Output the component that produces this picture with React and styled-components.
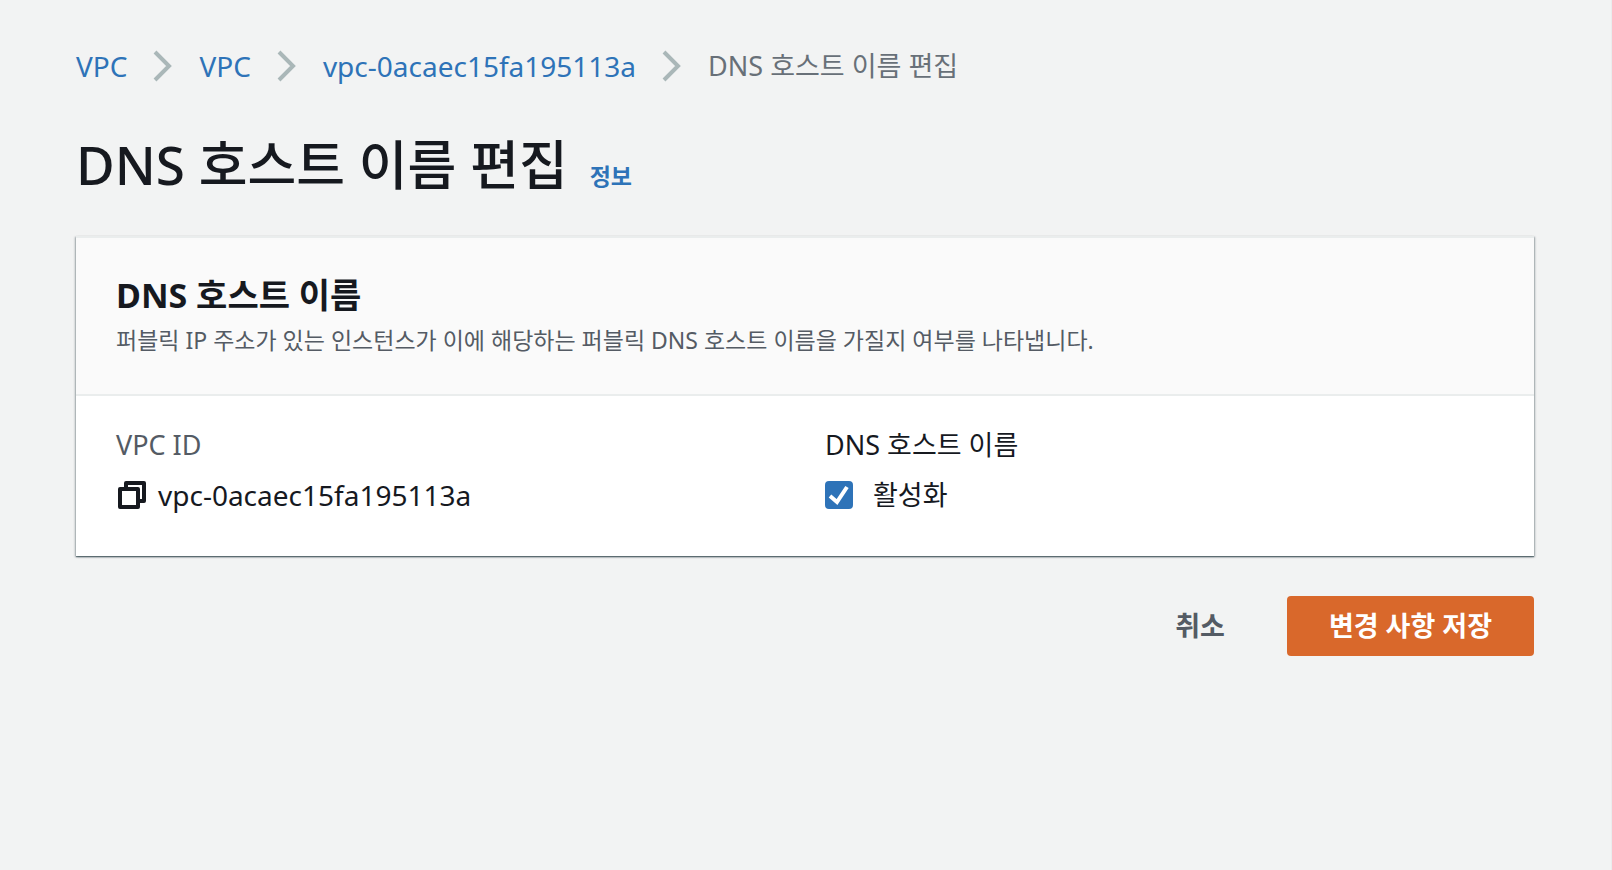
import React, { useState } from "react";
import styled, { createGlobalStyle } from "styled-components";

const GlobalStyle = createGlobalStyle`
  *, *::before, *::after {
    box-sizing: border-box;
  }

  body {
    margin: 0;
    background-color: #f2f3f3;
    color: #16191f;
    font-family: "Noto Sans", "Noto Sans CJK KR", sans-serif;
    font-size: 27px;
    line-height: 40px;
  }
`;

const Page = styled.div`
  min-height: 100vh;
  padding: 46px 77px 46px 76px;
  border-right: 1px solid #eaeded;
`;

// Breadcrumbs
const BreadcrumbList = styled.ol`
  display: flex;
  align-items: center;
  gap: 26px;
  margin: 0;
  padding: 0;
  list-style: none;
`;

const BreadcrumbItem = styled.li`
  display: flex;
  align-items: center;
  gap: 26px;
  color: #687078;
`;

const Link = styled.a`
  color: #2e73b8;
  text-decoration: none;
  font-size: 28px;
`;

const Chevron = styled.svg`
  width: 20px;
  height: 32px;
  fill: none;
  stroke: #aab7b8;
  stroke-width: 4;
`;

// Page heading
const Heading = styled.div`
  display: flex;
  align-items: baseline;
  gap: 22px;
  margin: 39px 0 31px;
`;

const Title = styled.h1`
  margin: 0;
  font-size: 53px;
  font-weight: 500;
  line-height: 80px;
`;

const InfoLink = styled(Link)`
  font-size: 23px;
  font-weight: 700;
`;

// Card
const Card = styled.section`
  background-color: #ffffff;
  border-top: 2px solid #eaeded;
  box-shadow: 0 1px 1px 0 rgba(0, 28, 36, 0.4), 1px 1px 2px 0 rgba(0, 28, 36, 0.3),
    -1px 1px 2px 0 rgba(0, 28, 36, 0.3);
`;

const CardHeader = styled.header`
  padding: 35px 40px 34px;
  background-color: #fafafa;
  border-bottom: 2px solid #eaeded;
`;

const CardTitle = styled.h2`
  margin: 0;
  font-size: 34px;
  font-weight: 700;
  line-height: 44px;
`;

const Description = styled.p`
  margin: 3px 0 0;
  color: #545b64;
  font-size: 23px;
`;

const CardBody = styled.div`
  display: grid;
  grid-template-columns: 1fr 1fr;
  gap: 40px;
  padding: 29px 40px 41px;
`;

const Field = styled.div`
  display: flex;
  flex-direction: column;
  gap: 10px;
  min-width: 0;
`;

const FieldLabel = styled.div`
  color: ${({ $muted }) => ($muted ? "#545b64" : "#16191f")};
`;

const ResourceId = styled.div`
  display: flex;
  align-items: center;
  gap: 12px;
  font-size: 28px;
`;

const CopyButton = styled.button`
  display: flex;
  padding: 0 0 0 2px;
  border: 0;
  background: none;
  color: #16191f;
  cursor: pointer;
`;

const CheckboxLabel = styled.label`
  display: flex;
  align-items: center;
  gap: 20px;
  cursor: pointer;
`;

const CheckboxBox = styled.span`
  display: grid;
  width: 28px;
  height: 28px;

  > * {
    grid-area: 1 / 1;
  }
`;

const Checkbox = styled.input`
  appearance: none;
  width: 28px;
  height: 28px;
  margin: 0;
  border: 2px solid #687078;
  border-radius: 4px;
  background-color: #ffffff;
  cursor: pointer;

  &:checked {
    border-color: #2e73b8;
    background-color: #2e73b8;
  }
`;

const CheckMark = styled.svg`
  width: 28px;
  height: 28px;
  fill: none;
  stroke: #ffffff;
  stroke-width: 4;
  pointer-events: none;
`;

// Form actions
const Actions = styled.div`
  display: flex;
  justify-content: flex-end;
  gap: 20px;
  margin-top: 40px;
`;

const Button = styled.button`
  height: 60px;
  padding: 0 42px;
  border: 0;
  border-radius: 4px;
  background-color: ${({ $primary }) => ($primary ? "#d9682b" : "transparent")};
  color: ${({ $primary }) => ($primary ? "#ffffff" : "#545b64")};
  font: inherit;
  font-weight: 700;
  cursor: pointer;
`;

const VPC_ID = "vpc-0acaec15fa195113a";

const crumbs = ["VPC", "VPC", VPC_ID];

const CopyIcon = () => (
  <svg width="28" height="28" viewBox="0 0 28 28" fill="none" stroke="currentColor" strokeWidth="4" strokeLinejoin="round">
    <path d="M8 8V2H26V20H20" />
    <path d="M2 8H20V26H2Z" />
  </svg>
);

const App = () => {
  const [enabled, setEnabled] = useState(true);

  return (
    <>
      <GlobalStyle />
      <Page>
        <nav aria-label="Breadcrumb">
          <BreadcrumbList>
            {crumbs.map((crumb, index) => (
              <BreadcrumbItem key={index}>
                <Link href="#">{crumb}</Link>
                <Chevron viewBox="0 0 20 32" aria-hidden="true">
                  <path d="M2 2L16 16L2 30" />
                </Chevron>
              </BreadcrumbItem>
            ))}
            <BreadcrumbItem aria-current="page">DNS 호스트 이름 편집</BreadcrumbItem>
          </BreadcrumbList>
        </nav>

        <main>
          <Heading>
            <Title>DNS 호스트 이름 편집</Title>
            <InfoLink href="#">정보</InfoLink>
          </Heading>

          <Card>
            <CardHeader>
              <CardTitle>DNS 호스트 이름</CardTitle>
              <Description>
                퍼블릭 IP 주소가 있는 인스턴스가 이에 해당하는 퍼블릭 DNS 호스트 이름을 가질지 여부를 나타냅니다.
              </Description>
            </CardHeader>
            <CardBody>
              <Field>
                <FieldLabel $muted>VPC ID</FieldLabel>
                <ResourceId>
                  <CopyButton type="button" aria-label="복사">
                    <CopyIcon />
                  </CopyButton>
                  {VPC_ID}
                </ResourceId>
              </Field>
              <Field role="group" aria-labelledby="dns-label">
                <FieldLabel id="dns-label">DNS 호스트 이름</FieldLabel>
                <CheckboxLabel>
                  <CheckboxBox>
                    <Checkbox
                      type="checkbox"
                      checked={enabled}
                      onChange={(e) => setEnabled(e.target.checked)}
                    />
                    {enabled && (
                      <CheckMark viewBox="0 0 28 28" aria-hidden="true">
                        <path d="M5 15L12 21L22 6" />
                      </CheckMark>
                    )}
                  </CheckboxBox>
                  활성화
                </CheckboxLabel>
              </Field>
            </CardBody>
          </Card>

          <Actions>
            <Button type="button">취소</Button>
            <Button type="submit" $primary>
              변경 사항 저장
            </Button>
          </Actions>
        </main>
      </Page>
    </>
  );
};

export default App;
